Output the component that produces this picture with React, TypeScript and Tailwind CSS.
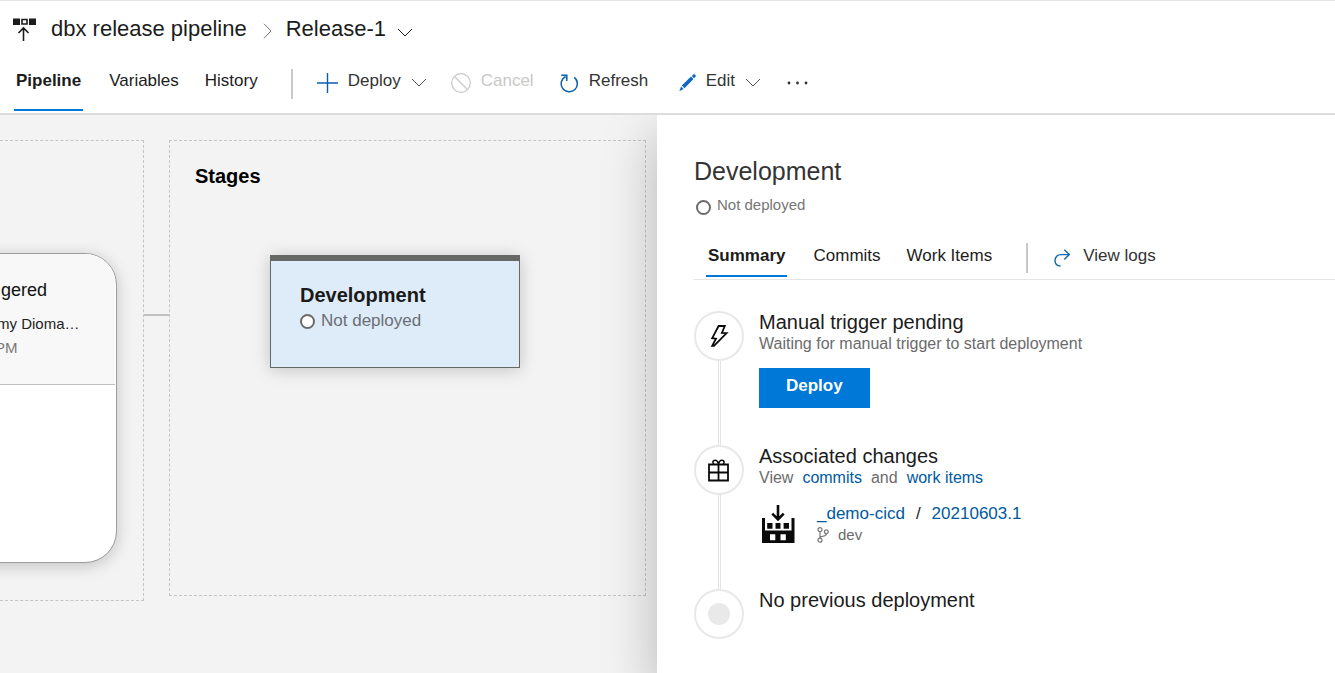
import type { ReactNode } from "react";

function ReleaseIcon() {
  return (
    <svg width="24" height="24" viewBox="0 0 24 24" fill="none" className="text-[#1c1c1c]">
      <path d="M0 .5h7v6.500H0zM16 .5h7v6.500h-7z" fill="currentColor" />
      <path d="M9 1.500h5v4.500H9z" stroke="currentColor" strokeWidth="1.600" />
      <path d="M10.500 23V10M5.500 15l5-5 5 5" stroke="currentColor" strokeWidth="1.600" />
    </svg>
  );
}

function ChevronDown() {
  return (
    <svg width="16" height="10" viewBox="0 0 16 10" fill="none" stroke="currentColor" strokeWidth="1">
      <path d="M1 1l7 7 7-7" />
    </svg>
  );
}

function ChevronRight() {
  return (
    <svg width="9" height="16" viewBox="0 0 9 16" fill="none" stroke="currentColor" strokeWidth="1">
      <path d="M1 .8l7 7.200-7 7.200" />
    </svg>
  );
}

function PlusIcon() {
  return (
    <svg width="21" height="20" viewBox="0 0 21 20" stroke="#0b5cad" strokeWidth="1.400">
      <path d="M0 10h21M10.500 0v20" />
    </svg>
  );
}

function CancelIcon() {
  return (
    <svg width="20" height="20" viewBox="0 0 20 20" fill="none" stroke="currentColor" strokeWidth="1.200">
      <circle cx="10" cy="10" r="9.300" />
      <path d="M3.500 3.500l13 13" />
    </svg>
  );
}

function RefreshIcon() {
  return (
    <svg width="19" height="19" viewBox="0 0 19 19" fill="none" stroke="#0b5fab" strokeWidth="1.500">
      <path d="M5.600 2.500A8.100 8.100 0 1 0 14.200 3.300" />
      <path d="M1.200 1.200h5.600v5.800" />
    </svg>
  );
}

function PencilIcon() {
  return (
    <svg width="17" height="18" viewBox="0 0 17 18" fill="#0c69c5">
      <path d="M12.800 1.900L14.300.5c.5-.5 1-.5 1.500 0l.7.7c.5.5.5 1 0 1.500L15.100 4.200zM12 2.600l2.500 2.500L5.500 14.200 2.800 11.500zM2.100 12.400l2.500 2.500L.3 17.300z" />
    </svg>
  );
}

function MoreIcon() {
  return (
    <svg width="21" height="4" viewBox="0 0 21 4" fill="currentColor">
      <circle cx="2" cy="2" r="1.400" />
      <circle cx="10.500" cy="2" r="1.400" />
      <circle cx="19" cy="2" r="1.400" />
    </svg>
  );
}

function LogsIcon() {
  return (
    <svg width="17" height="18" viewBox="0 0 17 18" fill="none" stroke="#0f67b1" strokeWidth="1.400">
      <path d="M6.500 17C3 16.800 1 14.400 1 11.500 1 8 3.500 5.600 7 5.600h8.500M10.300.8l5 4.800-5 4.800" />
    </svg>
  );
}

function BoltIcon() {
  return (
    <svg width="20" height="24" viewBox="0 0 20 24" fill="none" stroke="#0a0a0a" strokeWidth="1.800">
      <path d="M9.600 2h6.200L12.900 8.900l4.700.2L5 21.800H3.200L7 14.700 3.200 14.200z" />
    </svg>
  );
}

function GiftIcon() {
  return (
    <svg width="22" height="23" viewBox="0 0 22 23" fill="none" stroke="#0a0a0a" strokeWidth="1.800">
      <path d="M1 5.500h19v16H1zM1 13.500h19M10.500 5.500v16" />
      <path d="M10.500 5.200C9.800 2 8.500 1.200 7.100 1.200 4.500 1.200 4.300 4 6 5.300M10.500 5.200c.7-3.200 2-4 3.400-4 2.600 0 2.800 2.800 1.100 4.100" strokeWidth="1.600" />
    </svg>
  );
}

function BuildIcon() {
  return (
    <svg width="33" height="38" viewBox="0 0 33 38" fill="#0a0a0a">
      <path
        fillRule="evenodd"
        d="M0 13h3v12.500h26.500V13h3v25H0zM8 29.200v6h5.300v-6zM18.500 29.200v6h5.300v-6z"
      />
      <path d="M5.200 18h5.300v5.700H5.200zM13.500 18h5v5.700h-5zM21.600 18H27v5.700h-5.400z" />
      <path d="M16 0v14.500M10.300 8.600l5.700 5.800 5.700-5.800" fill="none" stroke="#0a0a0a" strokeWidth="2.600" />
    </svg>
  );
}

function BranchIcon() {
  return (
    <svg width="12" height="16" viewBox="0 0 12 16" fill="none" stroke="#777" strokeWidth="1.200">
      <circle cx="3" cy="2.700" r="2" />
      <circle cx="3" cy="13.200" r="2" />
      <circle cx="9.300" cy="4.800" r="1.900" />
      <path d="M3 4.700v6.500M9.300 6.700c0 2.700-3 2.300-5 2.900-.8.300-1.300.8-1.300 1.600" />
    </svg>
  );
}

function StatusDot({ className = "" }: { className?: string }) {
  return <span className={`size-[15px] shrink-0 rounded-full border-2 border-[#6b6b6b] ${className}`} />;
}

function Header() {
  return (
    <header className="border-t border-b-2 border-t-[#e6e6e6] border-b-[#dcdcdc] bg-white">
      <div className="flex h-14 items-center pl-[13px] text-[#1c1c1c]">
        <span className="pt-0.5"><ReleaseIcon /></span>
        <h1 className="flex items-center pb-0.5 text-[22px]">
          <a href="#pipeline" className="ml-3.5">dbx release pipeline</a>
          <span className="mr-3.5 ml-4 pt-1.5 text-[#777]"><ChevronRight /></span>
          <button type="button" className="flex items-center gap-[11px]">
            Release-1
            <span className="pt-2.5"><ChevronDown /></span>
          </button>
        </h1>
      </div>
      <div className="flex items-start pt-3 pb-0.5 pl-3.5 text-[17px] leading-6">
        <nav className="flex gap-[26px] text-[#1c1c1c]">
          <a href="#pipeline" className="border-b-2 border-[#0078d7] px-0.5 pb-4 font-bold">Pipeline</a>
          <a href="#variables">Variables</a>
          <a href="#history">History</a>
        </nav>
        <span className="mr-6 ml-[33px] h-[30px] w-0.5 bg-[#c8c8c8]" />
        <div className="flex text-[#333]">
          <button type="button" className="flex w-[134px] items-center">
            <span className="mr-2.5 pt-1"><PlusIcon /></span>
            Deploy
            <span className="ml-2.5 pt-1 text-[#555]"><ChevronDown /></span>
          </button>
          <button type="button" disabled className="flex w-[109px] items-center text-[#c8c8c8]">
            <span className="mr-2.5 pt-1"><CancelIcon /></span>
            Cancel
          </button>
          <button type="button" className="flex w-[119px] items-center">
            <span className="mr-2.5 pt-1"><RefreshIcon /></span>
            Refresh
          </button>
          <button type="button" className="flex w-[108px] items-center">
            <span className="mr-2.5 pt-1"><PencilIcon /></span>
            Edit
            <span className="ml-2.5 pt-1 text-[#555]"><ChevronDown /></span>
          </button>
          <button type="button" aria-label="More actions" className="flex items-center pt-1">
            <MoreIcon />
          </button>
        </div>
      </div>
    </header>
  );
}

function Canvas() {
  return (
    <main className="flex w-[657px] shrink-0 items-start overflow-hidden bg-[#f3f3f3] pt-[25px]">
      <section className="h-[461px] w-36 shrink-0 border-y border-r border-dashed border-[#c4c4c4] pt-28">
        <div className="-ml-6 h-[310px] w-[141px] overflow-hidden rounded-r-[32px] border border-[#9c9c9c] bg-white pr-px shadow-[0_3px_16px_rgba(0,0,0,0.2)]">
          <div className="h-[131px] border-b border-[#c0c0c0] bg-[#f8f8f8] pt-6">
            <p className="pl-6 text-lg leading-6 text-[#111]">gered</p>
            <p className="mt-2.5 pl-5 text-[15px] leading-6 whitespace-nowrap text-[#222]">my Dioma…</p>
            <p className="pl-[18px] text-[15px] leading-6 text-[#777]">PM</p>
          </div>
        </div>
      </section>
      <span className="mt-[174px] h-0.5 w-[25px] shrink-0 bg-[#c0c0c0]" />
      <section className="h-[456px] w-[477px] shrink-0 border border-dashed border-[#c4c4c4] px-[25px] pt-[23px]">
        <h2 className="text-xl leading-6 font-bold text-black">Stages</h2>
        <article className="mt-[67px] ml-[75px] h-[113px] w-[250px] border border-t-6 border-[#666866] bg-[#deebf8] px-[29px] pt-[22px] shadow-[0_2px_16px_rgba(0,0,0,0.2)]">
          <h3 className="text-xl leading-6 font-bold text-[#1a1a1a]">Development</h3>
          <p className="mt-0.5 flex items-center gap-1.5 text-[17px] leading-6 text-[#6b6f74]">
            <StatusDot className="bg-white" />
            Not deployed
          </p>
        </article>
      </section>
    </main>
  );
}

function TimelineItem({ icon, title, last = false, children }: {
  icon: ReactNode;
  title: string;
  last?: boolean;
  children?: ReactNode;
}) {
  return (
    <li className="flex gap-[15px]">
      <div className="flex flex-col items-center">
        <span className="flex size-[50px] items-center justify-center rounded-full border-2 border-[#e8e8e8]">{icon}</span>
        {!last && <span className="w-[3px] flex-1 border-x border-[#e4e4e4]" />}
      </div>
      <div className="leading-[22px]">
        <h3 className="text-xl leading-[22px] text-[#1c1c1c]">{title}</h3>
        {children}
      </div>
    </li>
  );
}

function DetailsPanel() {
  return (
    <aside className="relative min-w-0 flex-1 bg-white pt-10 pl-[37px] shadow-[0_20px_50px_rgba(0,0,0,0.26)]">
      <h2 className="text-[25px] leading-8 text-[#333]">Development</h2>
      <p className="mt-2 flex items-end gap-1.5 pl-0.5 text-[15px] leading-5 text-[#767676]">
        <StatusDot />
        Not deployed
      </p>
      <div className="mt-7 flex items-start border-b border-[#e4e4e4] pb-0.5 pl-3 text-[17px] leading-[26px]">
        <nav className="flex gap-[26px] text-[#1c1c1c]">
          <a href="#summary" className="border-b-2 border-[#0078d7] px-0.5 pb-1.5 font-bold">Summary</a>
          <a href="#commits">Commits</a>
          <a href="#work-items">Work Items</a>
        </nav>
        <span className="mr-[26px] ml-[34px] h-[30px] w-0.5 bg-[#c8c8c8]" />
        <button type="button" className="flex items-center gap-3 text-[#333]">
          <span className="pt-1"><LogsIcon /></span>
          View logs
        </button>
      </div>
      <ol className="mt-[31px]">
        <TimelineItem icon={<BoltIcon />} title="Manual trigger pending">
          <p className="text-base leading-[22px] text-[#6b6b6b]">Waiting for manual trigger to start deployment</p>
          <button type="button" className="mt-[13px] mb-[37px] h-10 bg-[#0078d7] px-[27px] pb-1 text-[17px] font-bold text-white">
            Deploy
          </button>
        </TimelineItem>
        <TimelineItem icon={<GiftIcon />} title="Associated changes">
          <p className="flex gap-[9px] text-base leading-[22px] text-[#6b6b6b]">
            View
            <a href="#commits" className="text-[#005a9e]">commits</a>
            and
            <a href="#work-items" className="text-[#005a9e]">work items</a>
          </p>
          <div className="mt-3.5 mb-11 flex items-start gap-[22px] pl-[3px]">
            <span className="pt-0.5"><BuildIcon /></span>
            <div>
              <p className="flex gap-[11px] text-[17px] text-[#1c1c1c]">
                <a href="#artifact" className="text-[#005a9e]">_demo-cicd</a>
                /
                <a href="#build" className="text-[#005a9e]">20210603.1</a>
              </p>
              <p className="flex items-center gap-[9px] text-[15px] leading-5 text-[#6b6b6b]">
                <BranchIcon />
                dev
              </p>
            </div>
          </div>
        </TimelineItem>
        <TimelineItem icon={<span className="size-[22px] rounded-full bg-[#e9e9e9]" />} title="No previous deployment" last />
      </ol>
    </aside>
  );
}

export default function App() {
  return (
    <div className="flex min-h-screen flex-col overflow-hidden bg-white font-['Liberation_Sans',Arial,sans-serif]">
      <Header />
      <div className="flex flex-1 overflow-hidden">
        <Canvas />
        <DetailsPanel />
      </div>
    </div>
  );
}
